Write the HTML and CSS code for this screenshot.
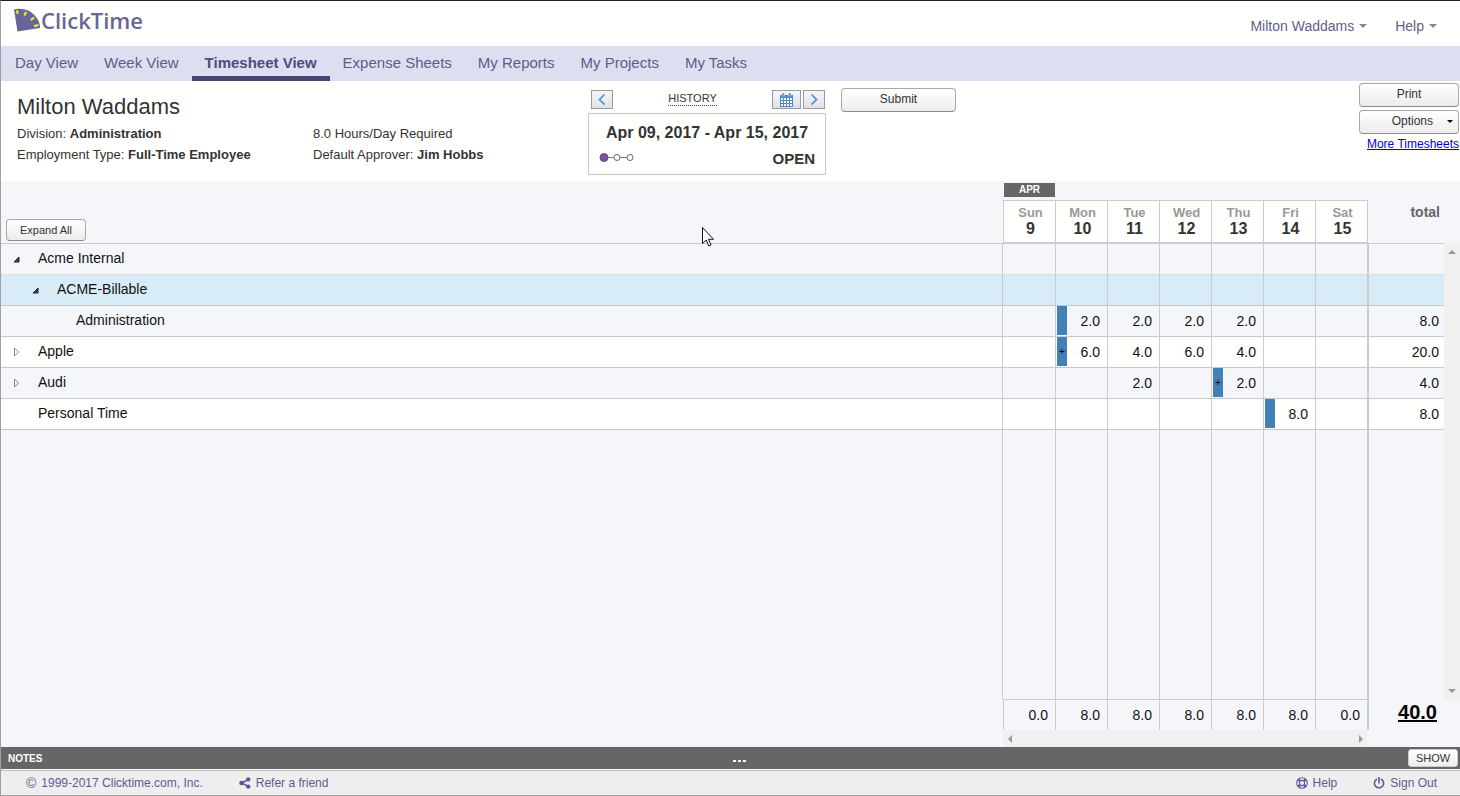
FILE: index.html
```html
<!DOCTYPE html>
<html lang="en">
<head>
<meta charset="utf-8">
<title>ClickTime - Timesheet View</title>
<link rel="stylesheet" href="styles.css">
</head>
<body>
<header class="topbar">
  <a class="logo" href="#">
    <svg class="logo-mark" width="27" height="24" viewBox="0 0 27 24" aria-hidden="true">
      <path d="M0 1.500C4 0 11 .5 16 3.500C22 7.500 26 13 26 20L3.500 23.500Z" fill="#666699"/>
      <g stroke="#f4f012" stroke-width="2.200" stroke-linecap="round">
        <path d="M3 3.200l.5 1.600M11.800 4.800l-1 1.800M19.500 10.200l-2 1.300M23.500 17.300l-2.500.6"/>
      </g>
    </svg>
    <span>ClickTime</span>
  </a>
  <div class="account">
    <button type="button" class="menu-button">Milton Waddams<span class="caret"></span></button>
    <button type="button" class="menu-button">Help<span class="caret"></span></button>
  </div>
</header>

<nav class="tabs">
  <a href="#">Day View</a>
  <a href="#">Week View</a>
  <a href="#" class="active" aria-current="page">Timesheet View</a>
  <a href="#">Expense Sheets</a>
  <a href="#">My Reports</a>
  <a href="#">My Projects</a>
  <a href="#">My Tasks</a>
</nav>

<section class="summary">
  <div class="profile">
    <h1>Milton Waddams</h1>
    <div class="facts">
      <div>Division: <b>Administration</b></div>
      <div>8.0 Hours/Day Required</div>
      <div>Employment Type: <b>Full-Time Employee</b></div>
      <div>Default Approver: <b>Jim Hobbs</b></div>
    </div>
  </div>
  <div class="period">
    <div class="period-nav">
      <button type="button" class="icon-button" aria-label="Previous period">
        <svg width="8" height="11" viewBox="0 0 8 11"><path d="M6.500 .5L1.500 5.500L6.500 10.500" fill="none" stroke="#4a90d0" stroke-width="1.600"/></svg>
      </button>
      <a class="history" href="#">HISTORY</a>
      <div class="period-right">
        <button type="button" class="icon-button wide" aria-label="Choose date">
          <svg width="13" height="14" viewBox="0 0 13 14">
            <path d="M0 2h13v12H0z" fill="#4a8ac8"/>
            <path d="M2 0h2.500v3H2zM8.500 0H11v3H8.500z" fill="#4a8ac8" stroke="#eef2f8" stroke-width=".5"/>
            <path d="M1 5h2v2H1zM4 5h2v2H4zM7 5h2v2H7zM10 5h2v2h-2zM1 8h2v2H1zM4 8h2v2H4zM7 8h2v2H7zM10 8h2v2h-2zM1 11h2v2H1zM4 11h2v2H4zM7 11h2v2H7zM10 11h2v2h-2z" fill="#f4f7fc"/>
          </svg>
        </button>
        <button type="button" class="icon-button" aria-label="Next period">
          <svg width="8" height="11" viewBox="0 0 8 11"><path d="M1.500 .5L6.500 5.500L1.500 10.500" fill="none" stroke="#4a90d0" stroke-width="1.600"/></svg>
        </button>
      </div>
    </div>
    <div class="period-box">
      <div class="period-dates">Apr 09, 2017 - Apr 15, 2017</div>
      <div class="period-status">
        <svg width="36" height="11" viewBox="0 0 36 11" aria-hidden="true">
          <path d="M9 5.500h6M21 5.500h7" stroke="#777" stroke-width="1"/>
          <circle cx="5" cy="5.500" r="4" fill="#7a5299" stroke="#5f4878"/>
          <circle cx="18" cy="5.500" r="3" fill="#fff" stroke="#666"/>
          <circle cx="31" cy="5.500" r="3" fill="#fff" stroke="#666"/>
        </svg>
        <span>OPEN</span>
      </div>
    </div>
  </div>
  <button type="button" class="push submit">Submit</button>
  <div class="actions">
    <button type="button" class="push">Print</button>
    <button type="button" class="push options">Options<span class="small-caret"></span></button>
    <a class="more" href="#">More Timesheets</a>
  </div>
</section>

<main class="sheet">
  <div class="table-wrap">
    <table class="times">
      <colgroup><col><col class="day" span="7"><col class="sum"></colgroup>
      <thead>
        <tr class="months">
          <td class="tools" rowspan="2"><button type="button" class="push expand">Expand All</button></td>
          <th class="month"><span>APR</span></th>
          <td colspan="6"></td>
          <td></td>
        </tr>
        <tr class="days">
          <th>Sun<b>9</b></th>
          <th>Mon<b>10</b></th>
          <th>Tue<b>11</b></th>
          <th>Wed<b>12</b></th>
          <th>Thu<b>13</b></th>
          <th>Fri<b>14</b></th>
          <th>Sat<b>15</b></th>
          <th class="sum-head">total</th>
        </tr>
      </thead>
      <tbody>
        <tr class="row shade dotted">
          <th><div class="name"><button type="button" class="toggle" aria-label="Collapse Acme Internal"><svg width="7" height="7" viewBox="0 0 7 7"><path d="M6 1v5H1z" fill="#445" stroke="#222"/></svg></button>Acme Internal</div></th>
          <td></td><td></td><td></td><td></td><td></td><td></td><td></td><td></td>
        </tr>
        <tr class="row picked">
          <th><div class="name level-2"><button type="button" class="toggle" aria-label="Collapse ACME-Billable"><svg width="7" height="7" viewBox="0 0 7 7"><path d="M6 1v5H1z" fill="#445" stroke="#222"/></svg></button>ACME-Billable</div></th>
          <td></td><td></td><td></td><td></td><td></td><td></td><td></td><td></td>
        </tr>
        <tr class="row shade">
          <th><div class="name level-3"><span class="toggle"></span>Administration</div></th>
          <td></td><td><div class="entry"><span class="mark"></span>2.0</div></td><td>2.0</td><td>2.0</td><td>2.0</td><td></td><td></td><td>8.0</td>
        </tr>
        <tr class="row">
          <th><div class="name"><button type="button" class="toggle" aria-label="Expand Apple"><svg width="7" height="10" viewBox="0 0 7 10"><path d="M1.500 1v8L5.500 5z" fill="none" stroke="#888"/></svg></button>Apple</div></th>
          <td></td><td><div class="entry"><span class="mark">+</span>6.0</div></td><td>4.0</td><td>6.0</td><td>4.0</td><td></td><td></td><td>20.0</td>
        </tr>
        <tr class="row shade">
          <th><div class="name"><button type="button" class="toggle" aria-label="Expand Audi"><svg width="7" height="10" viewBox="0 0 7 10"><path d="M1.500 1v8L5.500 5z" fill="none" stroke="#888"/></svg></button>Audi</div></th>
          <td></td><td></td><td>2.0</td><td></td><td><div class="entry"><span class="mark">+</span>2.0</div></td><td></td><td></td><td>4.0</td>
        </tr>
        <tr class="row">
          <th><div class="name"><span class="toggle"></span>Personal Time</div></th>
          <td></td><td></td><td></td><td></td><td></td><td><div class="entry"><span class="mark"></span>8.0</div></td><td></td><td>8.0</td>
        </tr>
        <tr class="filler">
          <th></th><td></td><td></td><td></td><td></td><td></td><td></td><td></td><td></td>
        </tr>
      </tbody>
      <tfoot>
        <tr class="totals">
          <td></td>
          <td>0.0</td><td>8.0</td><td>8.0</td><td>8.0</td><td>8.0</td><td>8.0</td><td>0.0</td>
          <td class="grand">40.0</td>
        </tr>
        <tr class="hscroll">
          <td></td>
          <td colspan="7"><div class="hbar"><span class="arrow left"></span><span class="arrow right"></span></div></td>
          <td></td>
        </tr>
      </tfoot>
    </table>
  </div>
  <div class="vscroll"><span class="arrow up"></span><span class="arrow down"></span></div>
  <svg class="pointer" width="12" height="20" viewBox="0 0 12 20" aria-hidden="true">
    <path d="M.5 .5v16l3.700-3.500 2.600 6 2.300-1-2.600-5.700h5z" fill="#fff" stroke="#111"/>
  </svg>
</main>

<section class="notes">
  <b>NOTES</b>
  <span class="grip"><i></i><i></i><i></i></span>
  <button type="button" class="show">SHOW</button>
</section>

<footer class="footer">
  <a href="#"><span class="copy">©</span>1999-2017 Clicktime.com, Inc.</a>
  <a href="#">
    <svg width="12" height="12" viewBox="0 0 12 12" aria-hidden="true"><path d="M9.500 2.500L2.500 6l7 3.500" fill="none" stroke="#5c5c92" stroke-width="1.500"/><circle cx="2.500" cy="6" r="2.300" fill="#5c5c92"/><circle cx="9.300" cy="2.400" r="2.200" fill="#5c5c92"/><circle cx="9.300" cy="9.600" r="2.200" fill="#5c5c92"/></svg>Refer a friend</a>
  <a href="#" class="push-right">
    <svg width="12" height="12" viewBox="0 0 12 12" aria-hidden="true"><circle cx="6" cy="6" r="5.300" fill="none" stroke="#5c5c92" stroke-width="1.100"/><circle cx="6" cy="6" r="2.600" fill="none" stroke="#5c5c92" stroke-width="1.100"/><path d="M2.300 2.300l1.900 1.900M9.700 2.300L7.800 4.200M2.300 9.700l1.900-1.900M9.700 9.700L7.800 7.800" stroke="#5c5c92" stroke-width="2.400"/></svg>Help</a>
  <a href="#">
    <svg width="12" height="12" viewBox="0 0 12 12" aria-hidden="true"><path d="M3.500 2.300a4.600 4.600 0 1 0 5 0M6 .5v5.500" fill="none" stroke="#5c5c92" stroke-width="1.600" stroke-linecap="round"/></svg>Sign Out</a>
</footer>
</body>
</html>
```
FILE: styles.css
```css
* {
  box-sizing: border-box;
}

body {
  margin: 0;
  height: 100vh;
  display: flex;
  flex-direction: column;
  border: solid #a0a0a0;
  border-width: 1px 0 1px 1px;
  border-top-color: #222;
  background: #fffffd;
  color: #333;
  font-family: "Liberation Sans", Arial, sans-serif;
  font-size: 13px;
}

button {
  font-family: inherit;
  padding: 0;
  color: #333;
}

/* Top bar */
.topbar {
  flex: none;
  display: flex;
  justify-content: space-between;
  height: 45px;
  padding: 0 23px 0 13px;
}

.logo {
  display: flex;
  align-items: flex-start;
  padding-top: 7px;
  color: #666699;
  font-family: "Open Sans", "Noto Sans", sans-serif;
  font-weight: 600;
  font-size: 22px;
  line-height: 24px;
  text-decoration: none;
}

.account {
  display: flex;
  align-items: center;
  gap: 28px;
  padding-top: 4px;
}

.menu-button {
  display: flex;
  align-items: center;
  gap: 5px;
  border: 0;
  background: none;
  color: #5f5f8c;
  font-size: 14px;
  line-height: 20px;
}

.caret {
  border: 4px solid transparent;
  border-top-color: #85859a;
  border-bottom: 0;
}

/* Tabs */
.tabs {
  flex: none;
  display: flex;
  height: 35px;
  padding-left: 1px;
  background: #dddff1;
}

.tabs a {
  padding: 0 13px;
  border-bottom: 5px solid transparent;
  color: #5c5c8a;
  font-size: 15px;
  line-height: 34px;
  text-decoration: none;
}

.tabs .active {
  border-bottom-color: #464675;
  color: #4c4c80;
  font-weight: 700;
}

/* Summary */
.summary {
  flex: none;
  display: flex;
  align-items: flex-start;
  height: 100px;
}

.profile {
  width: 587px;
  padding: 13px 0 0 16px;
}

h1 {
  margin: 0 0 3px;
  font-size: 22px;
  font-weight: 400;
  line-height: 26px;
}

.facts {
  display: grid;
  grid-template-columns: 296px 1fr;
  line-height: 21px;
}

.period {
  width: 238px;
  padding-top: 9px;
}

.period-nav {
  display: flex;
  align-items: center;
  justify-content: space-between;
  padding: 0 1px 0 3px;
}

.period-right {
  display: flex;
  gap: 2px;
}

.icon-button {
  display: flex;
  align-items: center;
  justify-content: center;
  width: 22px;
  height: 19px;
  border: 1px solid #9a9a9f;
  background: linear-gradient(#f6f6f8, #dfe0e6);
}

.icon-button.wide {
  width: 29px;
}

.history {
  margin-bottom: 2px;
  border-bottom: 1px dotted #444466;
  color: #333;
  font-size: 11px;
  line-height: 13px;
  text-decoration: none;
}

.period-box {
  margin-top: 4px;
  padding: 9px 10px 5px;
  border: 1px solid #c8c8c8;
}

.period-dates {
  font-size: 16px;
  font-weight: 700;
  line-height: 20px;
  text-align: center;
}

.period-status {
  display: flex;
  align-items: center;
  justify-content: space-between;
  padding-top: 6px;
  font-size: 15px;
  font-weight: 700;
  line-height: 20px;
}

.period-status svg {
  margin-bottom: 4px;
}

.push {
  height: 24px;
  padding-bottom: 2px;
  border: 1px solid #a8a8a8;
  border-bottom-color: #8c8c8c;
  border-radius: 4px;
  background: linear-gradient(#fff, #ececec);
  font-size: 12px;
}

.submit {
  width: 115px;
  margin: 7px 0 0 15px;
}

.actions {
  display: flex;
  flex-direction: column;
  gap: 3px;
  width: 100px;
  margin-left: auto;
  margin-right: 1px;
  padding-top: 2px;
}

.options {
  display: flex;
  align-items: center;
  justify-content: flex-end;
  gap: 14px;
  padding-right: 5px;
}

.small-caret {
  border: 3px solid transparent;
  border-top-color: #000;
  border-bottom: 0;
}

.more {
  color: #0000e0;
  font-size: 12px;
  line-height: 14px;
  text-align: right;
}

/* Timesheet */
.sheet {
  position: relative;
  flex: 1;
  min-height: 0;
  display: flex;
  background: #f5f6f9;
}

.table-wrap {
  flex: 1;
  min-width: 0;
}

.times {
  width: 100%;
  height: 100%;
  table-layout: fixed;
  border-collapse: separate;
  border-spacing: 0;
  color: #111;
  font-size: 14px;
}

.times th,
.times td {
  padding: 0;
}

.day {
  width: 52px;
}

.sum {
  width: 77px;
}

.months {
  height: 19px;
}

.month span {
  display: block;
  margin: 2px 0 3px 1px;
  background: #666;
  color: #fff;
  font-size: 10px;
  line-height: 14px;
}

.times .tools {
  padding: 0 0 2px 5px;
  border-bottom: 1px solid #c8c8cc;
  vertical-align: bottom;
}

.expand {
  display: block;
  width: 80px;
  height: 22px;
  padding: 0;
  font-size: 11px;
}

.days {
  height: 44px;
}

.days th {
  padding: 0 0 2px 2px;
  border: solid #ccc;
  border-width: 1px 0 2px 1px;
  background: #fffffd;
  color: #999;
  font-size: 13px;
  line-height: 16px;
}

.days b {
  display: block;
  color: #333;
  font-size: 16px;
}

.days .sum-head {
  padding: 4px 4px 0 0;
  border-width: 0 0 1px 1px;
  background: none;
  color: #666;
  font-size: 14px;
  text-align: right;
  vertical-align: top;
}

.row {
  height: 31px;
  background: #fffffd;
}

.row.shade {
  background: #f5f6fa;
}

.row.picked {
  background: #d8ecf8;
}

.row th {
  border-right: 1px solid #ccc;
  border-bottom: 1px solid #c8c8c8;
  font-weight: 400;
}

.row td {
  padding-right: 7px;
  border-bottom: 1px solid #c8c8c8;
  text-align: right;
}

.row.dotted th,
.row.dotted td {
  border-bottom-style: dotted;
}

.row td + td,
.filler td + td,
.totals td + td {
  border-left: 1px solid #ccc;
}

.times .row td:last-child,
.filler td:last-child {
  padding-right: 5px;
  border-left-width: 2px;
}

.name {
  display: flex;
  align-items: center;
  height: 30px;
  padding: 0 0 2px 12px;
}

.level-2 {
  padding-left: 31px;
}

.level-3 {
  padding-left: 50px;
}

.toggle {
  display: flex;
  width: 25px;
  padding-top: 2px;
  border: 0;
  background: none;
}

.entry {
  display: flex;
  align-items: center;
  justify-content: space-between;
  height: 30px;
  padding-left: 1px;
}

.mark {
  width: 10px;
  height: 29px;
  margin-bottom: 1px;
  background: #4480b8;
  color: #000;
  font-size: 10px;
  line-height: 29px;
  text-align: center;
}

.filler th {
  border-right: 1px solid #ccc;
}

.filler td {
  border-bottom: 1px solid #ccc;
}

.times .filler td:last-child {
  border-bottom: 0;
}

.totals {
  height: 30px;
}

.times .totals td {
  padding-right: 7px;
  text-align: right;
}

.times .totals .grand {
  padding: 0 7px 7px 0;
  border-left-width: 2px;
  color: #000;
  font-size: 20px;
  font-weight: 700;
  line-height: 22px;
  text-decoration: underline;
}

.hscroll {
  height: 17px;
}

.hbar,
.vscroll {
  display: flex;
  align-items: center;
  justify-content: space-between;
  background: #f0f0f0;
}

.hbar {
  height: 17px;
  padding: 0 4px 0 5px;
}

.vscroll {
  flex-direction: column;
  width: 16px;
  margin: 62px 0 47px;
  padding: 7px 0;
}

.arrow {
  border: 4px solid transparent;
}

.up {
  border-bottom-color: #999;
  border-top: 0;
}

.down {
  border-top-color: #999;
  border-bottom: 0;
}

.left {
  border-right-color: #999;
  border-left: 0;
}

.right {
  border-left-color: #999;
  border-right: 0;
}

.pointer {
  position: absolute;
  left: 701px;
  top: 46px;
}

/* Notes bar */
.notes {
  flex: none;
  display: grid;
  grid-template-columns: 1fr auto 1fr;
  align-items: center;
  height: 22px;
  padding: 0 2px 0 7px;
  background: #666;
  color: #fff;
  font-size: 10px;
}

.grip {
  display: flex;
  gap: 2px;
  padding: 6px 0 0 12px;
}

.grip i {
  width: 3px;
  height: 2px;
  background: #fff;
}

.show {
  justify-self: end;
  width: 50px;
  height: 18px;
  border: 1px solid #ccc;
  border-radius: 3px;
  background: linear-gradient(#fff, #eee);
  font-size: 11px;
}

/* Footer */
.footer {
  flex: none;
  display: flex;
  align-items: center;
  gap: 36px;
  height: 25px;
  margin-top: 1px;
  padding: 0 23px 0 25px;
  border-top: 1px solid #bbb;
  background: #eee;
}

.footer a {
  display: flex;
  align-items: center;
  gap: 5px;
  color: #5c5c92;
  font-size: 12px;
  text-decoration: none;
}

.footer .copy {
  font-size: 14px;
}

.push-right {
  margin-left: auto;
}
```
